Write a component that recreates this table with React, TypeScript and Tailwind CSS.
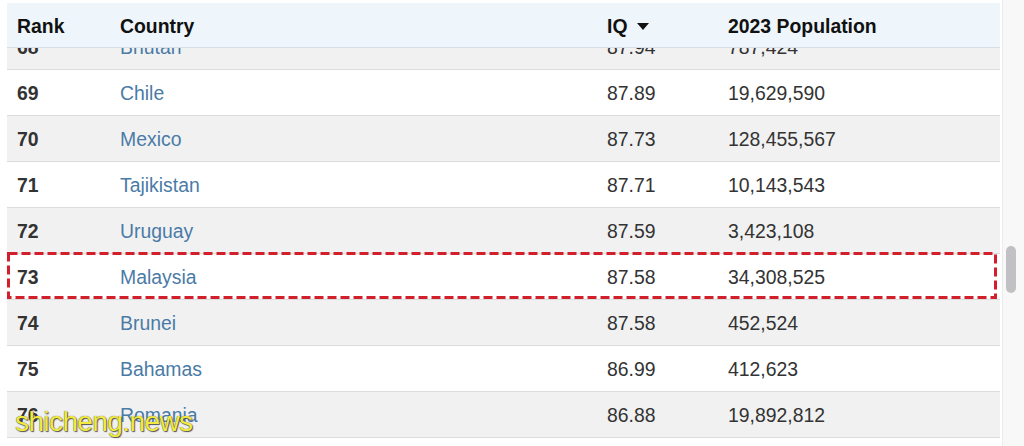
const rows = [
  { rank: 68, country: "Bhutan", iq: "87.94", pop: "787,424" },
  { rank: 69, country: "Chile", iq: "87.89", pop: "19,629,590" },
  { rank: 70, country: "Mexico", iq: "87.73", pop: "128,455,567" },
  { rank: 71, country: "Tajikistan", iq: "87.71", pop: "10,143,543" },
  { rank: 72, country: "Uruguay", iq: "87.59", pop: "3,423,108" },
  { rank: 73, country: "Malaysia", iq: "87.58", pop: "34,308,525" },
  { rank: 74, country: "Brunei", iq: "87.58", pop: "452,524" },
  { rank: 75, country: "Bahamas", iq: "86.99", pop: "412,623" },
  { rank: 76, country: "Romania", iq: "86.88", pop: "19,892,812" },
  { rank: 77, country: "Moldova", iq: "86.83", pop: "3,435,931" },
];

const grid = "grid grid-cols-[103px_487px_121px_1fr] items-center pl-[10px]";

const App = () => {
  return (
    <div className="relative flex h-[446px] w-[1024px] overflow-hidden bg-white font-['Liberation_Sans',Arial,sans-serif] text-[19.4px]">
      <div className="ml-[7px] flex w-[993px] flex-col pt-[3px]">
        {/* header */}
        <div className={`${grid} h-[45px] shrink-0 border-b border-[#d5dee6] bg-[#eef6fb] pt-[3px] font-bold text-[#111]`}>
          <span>Rank</span>
          <span>Country</span>
          <span className="flex items-center gap-[10px]">
            IQ
            <svg width="12" height="7" viewBox="0 0 12 7">
              <path d="M0 0h12L6 7z" fill="#111" />
            </svg>
          </span>
          <span>2023 Population</span>
        </div>

        {/* body */}
        <div className="flex-1 overflow-hidden">
          <div className="-mt-[24px]">
            {rows.map((r, i) => (
              <div
                key={r.rank}
                className={`${grid} relative h-[46px] border-b border-[#dcdcdc] pt-[3px] ${
                  i % 2 === 0 ? "bg-[#f1f1f2]" : "bg-white"
                }`}
              >
                <span className="font-bold text-[#333]">{r.rank}</span>
                <span className="text-[#4a7ba6]">{r.country}</span>
                <span className="text-[#333]">{r.iq}</span>
                <span className="text-[#333]">{r.pop}</span>
                {r.rank === 73 && (
                  <svg
                    className="pointer-events-none absolute -top-[2px] left-0"
                    width="990"
                    height="47"
                    viewBox="0 0 990 47"
                  >
                    <rect
                      x="1.5"
                      y="1.5"
                      width="987"
                      height="44"
                      fill="none"
                      stroke="#d11f2b"
                      strokeWidth="3"
                      strokeDasharray="9 4"
                    />
                  </svg>
                )}
              </div>
            ))}
          </div>
        </div>
      </div>

      {/* scrollbar */}
      <div className="ml-[2px] flex-1 border-l border-[#ececee] bg-[#f8f8f9] pt-[246px] pl-[3px] pr-[8px]">
        <div className="h-[47px] w-[10px] rounded-full bg-[#c1c1c3]" />
      </div>

      {/* watermark */}
      <div className="pointer-events-none absolute left-[15px] top-[408px] text-[28px] leading-none tracking-[-0.6px] text-[#f2ea3c] [text-shadow:0_0_1px_#444,1px_1px_1px_#555]">
        shicheng.news
      </div>
    </div>
  );
};

export default App;
